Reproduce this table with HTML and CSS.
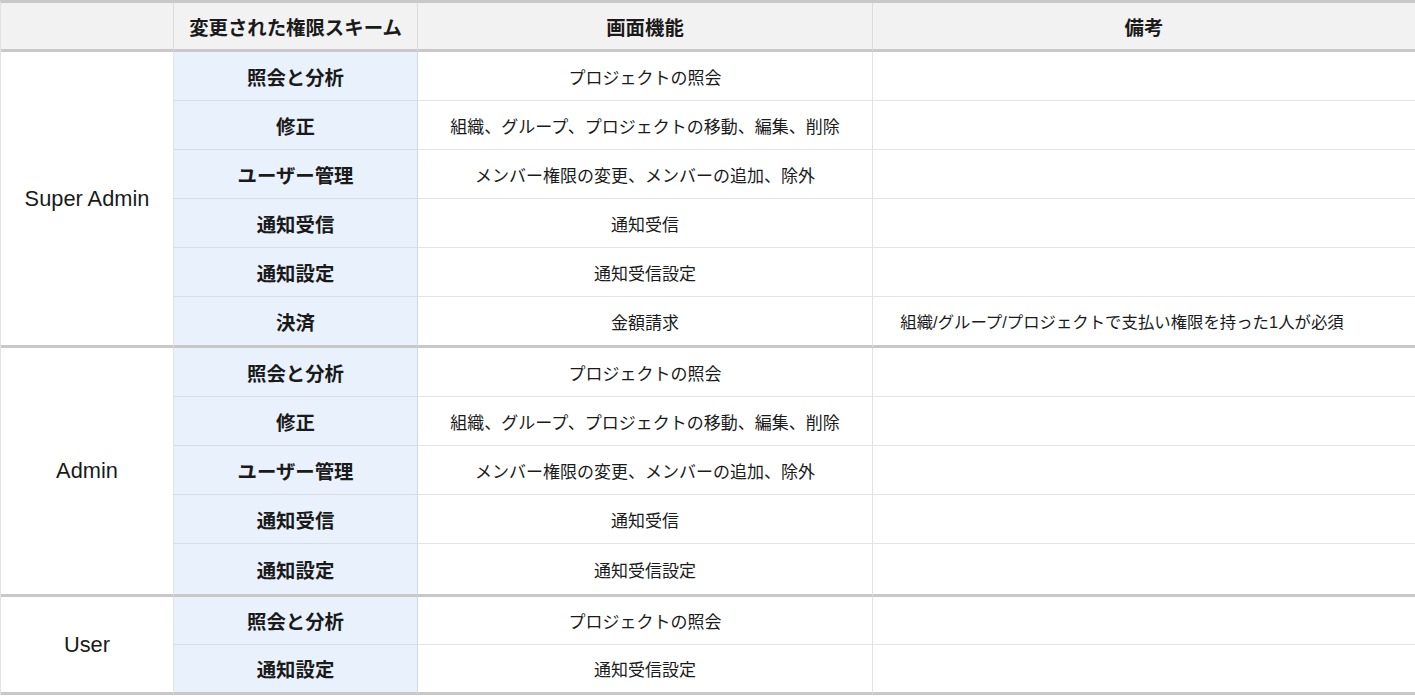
FILE: index.html
```html
<!DOCTYPE html>
<html lang="ja">
<head>
<meta charset="utf-8">
<title>権限スキーム</title>
<link rel="stylesheet" href="styles.css">
</head>
<body>
<div class="perm-table">
  <div class="cell head"></div>
  <div class="cell head">変更された権限スキーム</div>
  <div class="cell head">画面機能</div>
  <div class="cell head">備考</div>

  <div class="cell role span6 group-end">Super Admin</div>
  <div class="cell scheme">照会と分析</div>
  <div class="cell func">プロジェクトの照会</div>
  <div class="cell note"></div>
  <div class="cell scheme">修正</div>
  <div class="cell func">組織、グループ、プロジェクトの移動、編集、削除</div>
  <div class="cell note"></div>
  <div class="cell scheme">ユーザー管理</div>
  <div class="cell func">メンバー権限の変更、メンバーの追加、除外</div>
  <div class="cell note"></div>
  <div class="cell scheme">通知受信</div>
  <div class="cell func">通知受信</div>
  <div class="cell note"></div>
  <div class="cell scheme">通知設定</div>
  <div class="cell func">通知受信設定</div>
  <div class="cell note"></div>
  <div class="cell scheme group-end">決済</div>
  <div class="cell func group-end">金額請求</div>
  <div class="cell note group-end">組織/グループ/プロジェクトで支払い権限を持った1人が必須</div>

  <div class="cell role span5 group-end">Admin</div>
  <div class="cell scheme">照会と分析</div>
  <div class="cell func">プロジェクトの照会</div>
  <div class="cell note"></div>
  <div class="cell scheme">修正</div>
  <div class="cell func">組織、グループ、プロジェクトの移動、編集、削除</div>
  <div class="cell note"></div>
  <div class="cell scheme">ユーザー管理</div>
  <div class="cell func">メンバー権限の変更、メンバーの追加、除外</div>
  <div class="cell note"></div>
  <div class="cell scheme">通知受信</div>
  <div class="cell func">通知受信</div>
  <div class="cell note"></div>
  <div class="cell scheme group-end">通知設定</div>
  <div class="cell func group-end">通知受信設定</div>
  <div class="cell note group-end"></div>

  <div class="cell role span2 group-end">User</div>
  <div class="cell scheme">照会と分析</div>
  <div class="cell func">プロジェクトの照会</div>
  <div class="cell note"></div>
  <div class="cell scheme group-end">通知設定</div>
  <div class="cell func group-end">通知受信設定</div>
  <div class="cell note group-end"></div>
</div>
</body>
</html>
```

FILE: styles.css
```css
* { box-sizing: border-box; }
html, body {
  margin: 0;
  padding: 0;
  background: #ffffff;
}
body {
  font-family: "Liberation Sans", "Noto Sans CJK JP", sans-serif;
  color: #1a1a1a;
}
.perm-table {
  display: grid;
  width: 1415px;
  grid-template-columns: 173px 244px 455px 543px;
  grid-template-rows: 49px 49px 49px 49px 49px 49px 51px 49px 49px 49px 49px 53px 48px 50px;
  border-top: 3px solid #c8c8c8;
  border-left: 1px solid #e2e2e2;
}
.cell {
  display: flex;
  align-items: center;
  justify-content: center;
  text-align: center;
  border-bottom: 1px solid #e4e4e4;
  border-right: 1px solid #e2e2e2;
  white-space: nowrap;
}
.head {
  background: #f2f2f2;
  font-weight: bold;
  font-size: 19.4px;
  border-bottom: 3px solid #c8c8c8;
  border-right-color: #dcdcdc;
}
.role {
  font-size: 21.8px;
  background: #ffffff;
}
.span6 { grid-row: span 6; }
.span5 { grid-row: span 5; }
.span2 { grid-row: span 2; }
.scheme {
  background: #e9f1fc;
  font-weight: bold;
  font-size: 19.4px;
  border-bottom-color: #d6dde7;
  border-right-color: #d3d9e2;
}
.func {
  font-size: 17px;
}
.note {
  font-size: 16.4px;
  padding-right: 44px;
}
.group-end {
  border-bottom: 3px solid #c8c8c8;
}
```
